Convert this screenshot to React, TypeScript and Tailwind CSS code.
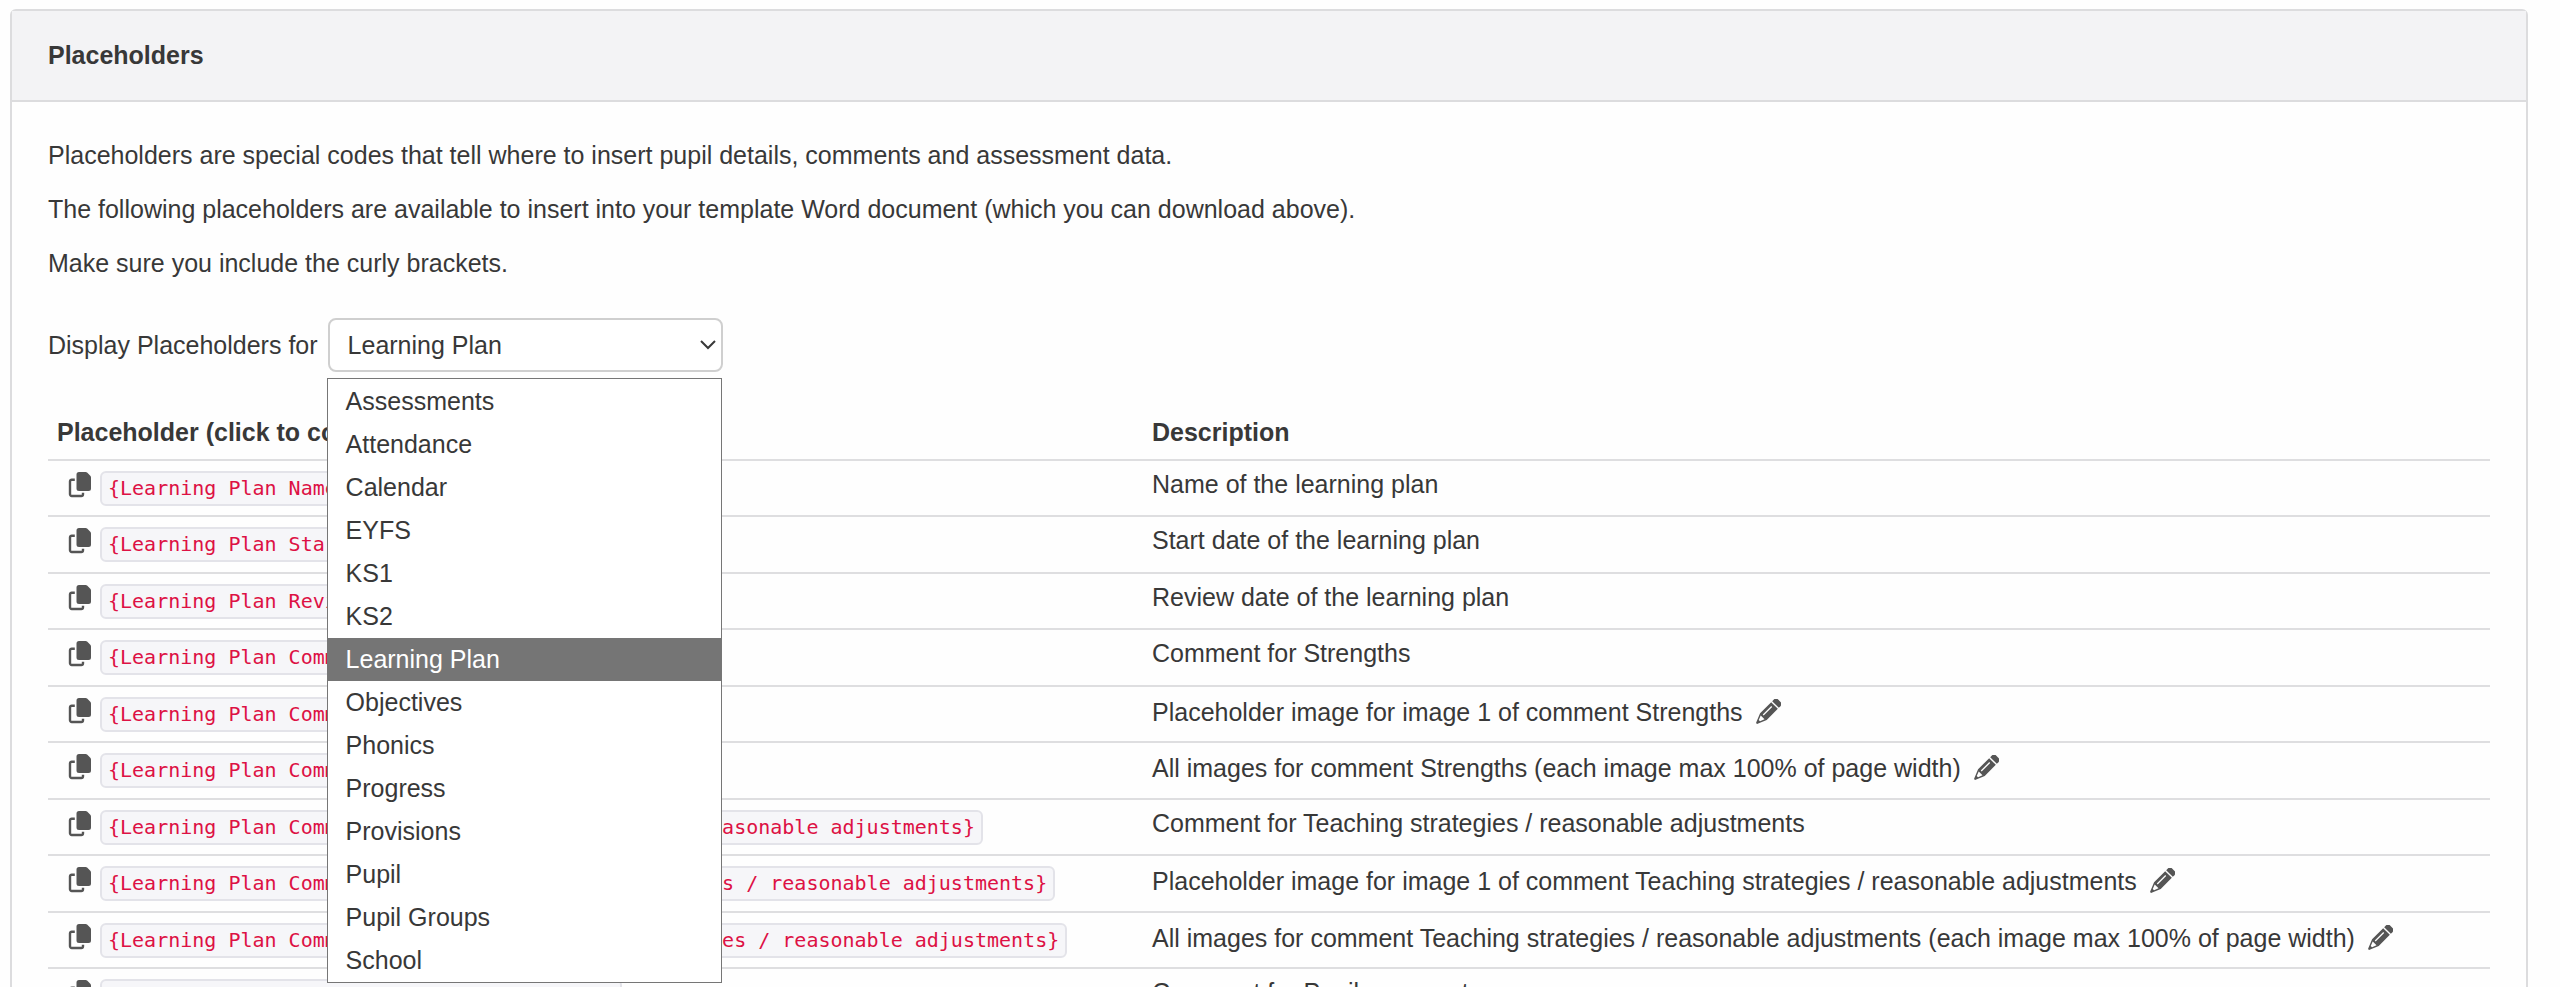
import { useState } from "react";

const categories = [
  "Assessments",
  "Attendance",
  "Calendar",
  "EYFS",
  "KS1",
  "KS2",
  "Learning Plan",
  "Objectives",
  "Phonics",
  "Progress",
  "Provisions",
  "Pupil",
  "Pupil Groups",
  "School",
];

type Row = { code: string; description: string; editable?: boolean };

const rows: Row[] = [
  { code: "{Learning Plan Name}", description: "Name of the learning plan" },
  { code: "{Learning Plan Start}", description: "Start date of the learning plan" },
  { code: "{Learning Plan Review}", description: "Review date of the learning plan" },
  { code: "{Learning Plan Comment Strengths}", description: "Comment for Strengths" },
  {
    code: "{Learning Plan Comment Image1 Strengths}",
    description: "Placeholder image for image 1 of comment Strengths",
    editable: true,
  },
  {
    code: "{Learning Plan Comment Images Strengths}",
    description: "All images for comment Strengths (each image max 100% of page width)",
    editable: true,
  },
  {
    code: "{Learning Plan Comment for Teaching strategies / reasonable adjustments}",
    description: "Comment for Teaching strategies / reasonable adjustments",
  },
  {
    code: "{Learning Plan Comment Image1 of Teaching strategies / reasonable adjustments}",
    description: "Placeholder image for image 1 of comment Teaching strategies / reasonable adjustments",
    editable: true,
  },
  {
    code: "{Learning Plan Comment All Images Teaching strategies / reasonable adjustments}",
    description:
      "All images for comment Teaching strategies / reasonable adjustments (each image max 100% of page width)",
    editable: true,
  },
  { code: "{Learning Plan Comment for Pupil comments}", description: "Comment for Pupil comments" },
];

function CopyIcon() {
  return (
    <svg viewBox="0 0 24 26" className="mt-px h-[26px] w-6" aria-hidden="true">
      <path
        fill="currentColor"
        d="M11 0h6.6c.6 0 1.100.2 1.500.6l3.200 3.200c.4.4.7 1 .7 1.600V16.500a2.500 2.500 0 0 1-2.500 2.500H11a2.500 2.500 0 0 1-2.500-2.500v-14A2.500 2.500 0 0 1 11 0z"
      />
      <path
        fill="none"
        stroke="currentColor"
        strokeWidth="2.400"
        d="M6.800 7.700H3.700A1.700 1.700 0 0 0 2 9.400v12.900A1.700 1.700 0 0 0 3.700 24h9.600a1.700 1.700 0 0 0 1.700-1.700V20.800"
      />
    </svg>
  );
}

function PencilIcon() {
  return (
    <svg viewBox="0 0 26 26" className="size-[26px]" fill="currentColor" aria-hidden="true">
      <g transform="translate(13 13) rotate(45)">
        <path d="M-4.700-10.600v-2.400a3 3 0 0 1 3-3h3.400a3 3 0 0 1 3 3v2.400z" />
        <path
          fillRule="evenodd"
          d="M-4.700-9.200h9.400V6.500L1 15.700a1.100 1.100 0 0 1-2 0L-4.700 6.500zM-1.900-6.500v12h1.300v-12zM-2.700 7.600L-.9 12.200h1.800L2.700 7.600z"
        />
      </g>
    </svg>
  );
}

export default function App() {
  const [selected, setSelected] = useState("Learning Plan");

  return (
    <main className="h-screen overflow-hidden bg-[#fefefe] pt-[9px] pr-8 pl-[10px] font-['Liberation_Sans',Arial,sans-serif] text-[25px] leading-[38px] text-[#383838]">
      <section className="rounded-t-md border-2 border-[#dcdcde]">
        <header className="border-b-2 border-[#dcdcde] bg-[#f3f3f5] px-9 pt-[25px] pb-[26px]">
          <h1 className="font-bold">Placeholders</h1>
        </header>

        <div className="px-9 pt-[34px]">
          <div className="flex flex-col gap-4">
            <p>Placeholders are special codes that tell where to insert pupil details, comments and assessment data.</p>
            <p>The following placeholders are available to insert into your template Word document (which you can download above).</p>
            <p>Make sure you include the curly brackets.</p>
          </div>

          <div className="mt-9 flex items-center gap-2.5">
            <label htmlFor="category">Display Placeholders for</label>
            <div className="relative">
              <select
                id="category"
                value={selected}
                onChange={(event) => setSelected(event.target.value)}
                className="block h-[54px] w-[395px] appearance-none rounded-lg border-2 border-[#cfcfcf] bg-white px-[18px] text-[#383838]"
              >
                {categories.map((name) => (
                  <option key={name}>{name}</option>
                ))}
              </select>
              <svg
                viewBox="0 0 16 10"
                className="pointer-events-none absolute top-[22px] right-[7px] h-[10px] w-4"
                fill="none"
                stroke="currentColor"
                strokeWidth="2"
                aria-hidden="true"
              >
                <path d="M1 1l7 7 7-7" />
              </svg>
              <ul
                role="listbox"
                aria-label="Placeholder groups"
                className="absolute top-[60px] right-px -left-px z-10 border border-[#767676] bg-white pt-px"
              >
                {categories.map((name) => (
                  <li
                    key={name}
                    role="option"
                    aria-selected={name === selected}
                    onClick={() => setSelected(name)}
                    className="h-[43px] px-[18px] leading-[43px] aria-selected:bg-[#757575] aria-selected:text-white"
                  >
                    {name}
                  </li>
                ))}
              </ul>
            </div>
          </div>

          <table className="mt-8 w-full border-collapse text-left">
            <thead>
              <tr className="h-[56px] border-b-2 border-[#dedee0]">
                <th className="w-[1096px] px-[9px] font-bold">Placeholder (click to copy)</th>
                <th className="px-2 font-bold">Description</th>
              </tr>
            </thead>
            <tbody>
              {rows.map((row) => (
                <tr key={row.code} className="border-b-2 border-[#dedee0] align-top odd:h-[56px] even:h-[57px]">
                  <td className="pt-2.5 pr-2 pl-5">
                    <button type="button" className="flex items-start gap-2 text-[#555555]">
                      <CopyIcon />
                      <code className="rounded-md border-2 border-[#e3e3e9] bg-[#f6f6f9] px-1.5 font-[Consolas,'DejaVu_Sans_Mono',monospace] text-[20px] leading-[31px] whitespace-nowrap text-[#dd1144]">
                        {row.code}
                      </code>
                    </button>
                  </td>
                  <td className="px-2 pt-1">
                    <div className="flex items-center gap-3">
                      {row.description}
                      {row.editable && (
                        <button type="button" aria-label="Edit image size" className="h-[42px] text-[#555555]">
                          <PencilIcon />
                        </button>
                      )}
                    </div>
                  </td>
                </tr>
              ))}
            </tbody>
          </table>
        </div>
      </section>
    </main>
  );
}
